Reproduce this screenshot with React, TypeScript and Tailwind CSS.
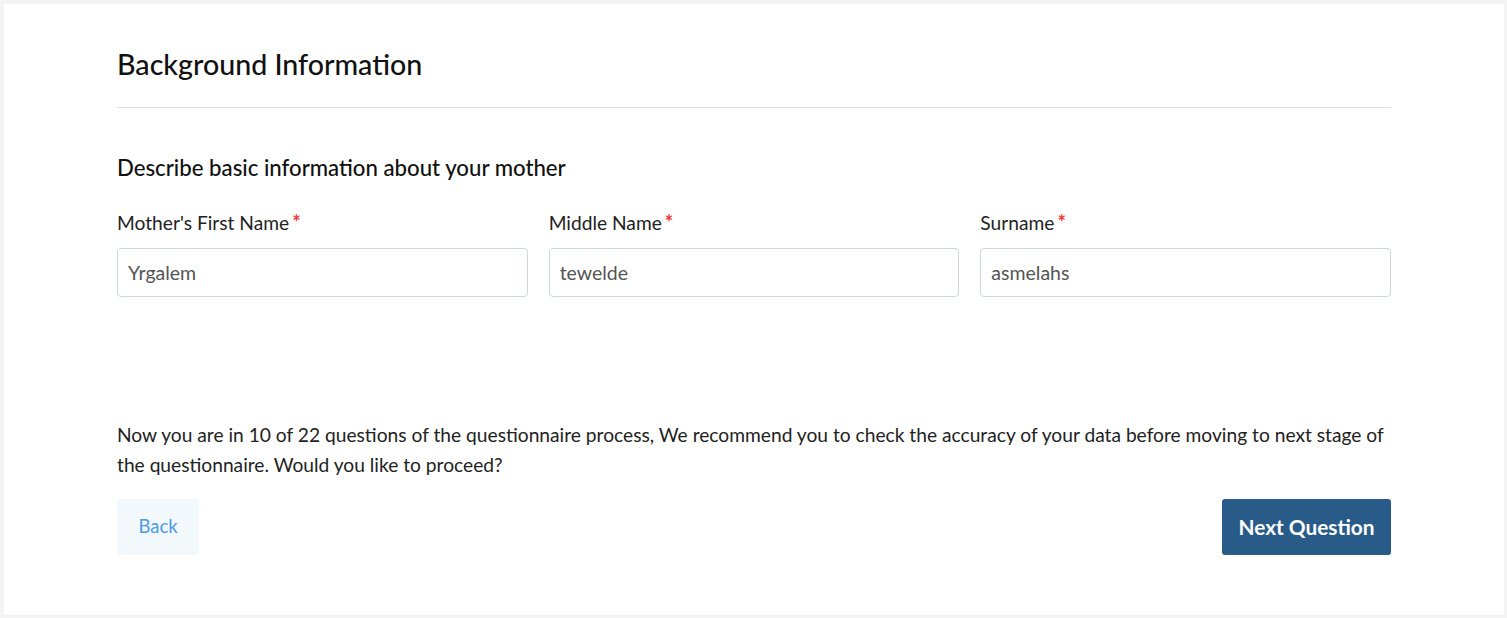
import React from "react";

type FieldProps = {
  label: string;
  value: string;
};

const Field = ({ label, value }: FieldProps): React.ReactElement => (
  <div className="flex flex-col">
    <label className="text-[19.2px] leading-[24px] text-[#222]">
      {label}
      <span className="ml-[3px] text-[20px] font-bold text-[#f0383c]">*</span>
    </label>
    <input
      className="mt-[13px] h-[49px] w-full rounded-[4px] border border-[#cfd6de] px-[10px] text-[19.5px] text-[#555] outline-none"
      defaultValue={value}
    />
  </div>
);

export default function App(): React.ReactElement {
  return (
    <div
      className="h-[618px] bg-[#f3f3f3] pt-1 pl-1 pr-[3px] pb-[3px]"
      style={{ fontFamily: "Lato, 'Open Sans', sans-serif" }}
    >
      <div className="h-full bg-white px-[113px] pt-[40px]">
        <h1 className="border-b border-[#e3e3e3] pb-[22px] text-[28.6px] leading-[41px] font-medium text-[#111]">
          Background Information
        </h1>

        <h2 className="mt-[45px] text-[22.2px] leading-[30px] font-medium text-[#111]">
          Describe basic information about your mother
        </h2>

        <div className="mt-[27px] grid grid-cols-3 gap-x-[21px]">
          <Field label="Mother's First Name" value="Yrgalem" />
          <Field label="Middle Name" value="tewelde" />
          <Field label="Surname" value="asmelahs" />
        </div>

        <p className="mt-[123px] text-[19.2px] leading-[30px] text-[#222]">
          Now you are in 10 of 22 questions of the questionnaire process, We
          recommend you to check the accuracy of your data before moving to next
          stage of the questionnaire. Would you like to proceed?
        </p>

        <div className="mt-[19px] flex items-center justify-between">
          <button className="h-[56px] rounded-[3px] bg-[#f3f8fd] px-[21.5px] text-[18.5px] text-[#4a9be6]">
            Back
          </button>
          <button className="h-[56px] rounded-[3px] bg-[#295b89] px-[16.5px] text-[20.8px] font-bold text-white">
            Next Question
          </button>
        </div>
      </div>
    </div>
  );
}
